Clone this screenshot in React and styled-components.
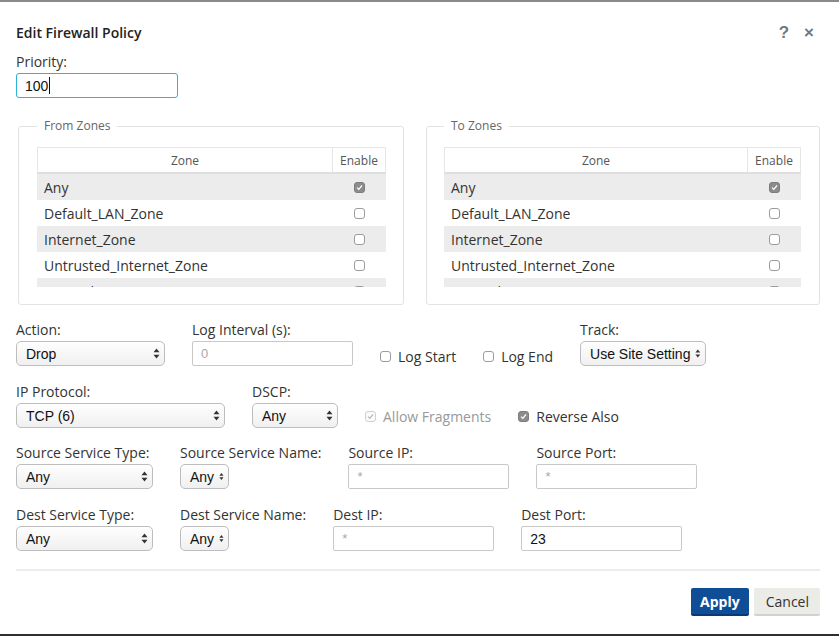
import React from "react";
import styled, { createGlobalStyle, css } from "styled-components";

const GlobalStyle = createGlobalStyle`
  html, body {
    margin: 0;
    padding: 0;
    background: #fff;
  }
  body {
    font-family: "Open Sans", "Liberation Sans", sans-serif;
    color: #333;
  }
`;

const Page = styled.div`
  width: 839px;
  height: 636px;
  box-sizing: border-box;
  border-top: 2px solid #8a8a8a;
  border-bottom: 2px solid #2e2e2e;
  display: flex;
  flex-direction: column;
  overflow: hidden;
`;

const Header = styled.div`
  display: flex;
  align-items: center;
  justify-content: space-between;
  padding: 21px 25px 0 16px;
  height: 20px;
`;

const Title = styled.h1`
  margin: 0;
  font-size: 14px;
  line-height: 20px;
  font-weight: 600;
  color: #222;
`;

const HeaderTools = styled.div`
  display: flex;
  align-items: center;
  gap: 15px;
  font-weight: 700;
`;

const ToolGlyph = styled.span`
  font-family: "Liberation Sans", sans-serif;
  font-size: ${(p) => p.$size}px;
  line-height: 20px;
  color: #777;
`;

const Body = styled.div`
  padding: 9px 19px 0 16px;
`;

const Label = styled.div`
  font-size: 14px;
  line-height: 20px;
  color: #333;
  white-space: nowrap;
  margin-bottom: 1px;
`;

const TextBox = styled.div`
  width: ${(p) => p.$w}px;
  height: 25px;
  box-sizing: border-box;
  border: 1px solid ${(p) => (p.$focus ? "#2bb3d8" : "#c9c9c9")};
  border-radius: ${(p) => (p.$focus ? 3 : 2)}px;
  padding: 0 8px;
  display: flex;
  align-items: center;
  font-family: "Liberation Sans", Arial, sans-serif;
  font-size: ${(p) => (p.$placeholder ? 13 : 14)}px;
  color: ${(p) => (p.$placeholder ? "#a9a9a9" : "#111")};
  background: #fff;
`;

const Caret = styled.span`
  display: inline-block;
  width: 1px;
  height: 17px;
  background: #111;
  margin-left: 1px;
`;

const Zones = styled.div`
  display: grid;
  grid-template-columns: 386px 394px;
  column-gap: 22px;
  margin: 20px 0 0 2px;
`;

const Fieldset = styled.fieldset`
  margin: 0;
  border: 1px solid #e2e2e2;
  border-radius: 3px;
  padding: 13px ${(p) => p.$pr}px 17px ${(p) => p.$pl}px;
  min-width: 0;
`;

const Legend = styled.legend`
  font-size: 12px;
  line-height: 16px;
  color: #666;
  padding: 0 7px;
  margin-left: 0;
`;

const Table = styled.div`
  display: flex;
  flex-direction: column;
`;

const HeadRow = styled.div`
  display: grid;
  grid-template-columns: 1fr 53px;
  height: 24px;
  border: 1px solid #e6e6e6;
  border-bottom: 2px solid #dedede;
`;

const HeadCell = styled.div`
  display: flex;
  align-items: center;
  justify-content: center;
  font-size: 12px;
  color: #555;
  ${(p) =>
    p.$divided &&
    css`
      border-left: 1px solid #e6e6e6;
    `}
`;

const Rows = styled.div`
  height: 113px;
  overflow: hidden;
`;

const Row = styled.div`
  display: grid;
  grid-template-columns: 1fr 53px;
  height: 26px;
  align-items: center;
  background: ${(p) => (p.$alt ? "#ececec" : "#fff")};
`;

const ZoneName = styled.div`
  padding-left: 7px;
  font-size: 14px;
  color: #333;
`;

const CheckCell = styled.div`
  display: flex;
  justify-content: center;
`;

const Box = styled.span`
  width: 11px;
  height: 11px;
  box-sizing: border-box;
  border-radius: 3px;
  display: inline-flex;
  align-items: center;
  justify-content: center;
  flex: none;
  border: 1px solid #9c9c9c;
  background: #fff;
  ${(p) =>
    p.$checked &&
    !p.$disabled &&
    css`
      border-color: #7d7d7d;
      background: #8c8c8c;
    `}
  ${(p) =>
    p.$disabled &&
    css`
      border-color: #cfcfcf;
      background: #fbfbfb;
    `}
`;

const Checkbox = ({ checked, disabled }) => (
  <Box $checked={checked} $disabled={disabled}>
    {checked && (
      <svg width="7" height="7" viewBox="0 0 7 7">
        <path
          d="M1 3.6 L2.8 5.3 L6 1.5"
          fill="none"
          stroke={disabled ? "#b8b8b8" : "#fff"}
          strokeWidth="1.2"
        />
      </svg>
    )}
  </Box>
);

const FormRow = styled.div`
  display: flex;
  align-items: flex-end;
  gap: 27px;
  margin-top: ${(p) => p.$mt}px;
`;

const Field = styled.div`
  display: flex;
  flex-direction: column;
`;

const CheckItem = styled.label`
  display: flex;
  align-items: center;
  gap: 7px;
  height: 25px;
  margin-bottom: ${(p) => p.$drop}px;
  font-size: 14px;
  color: ${(p) => (p.$disabled ? "#999" : "#333")};
`;

const SelectBox = styled.div`
  width: ${(p) => p.$w}px;
  height: 25px;
  box-sizing: border-box;
  border: 1px solid #bdbdbd;
  border-radius: 5px;
  background: linear-gradient(#fefefe, #f0f0f0);
  display: flex;
  align-items: center;
  justify-content: space-between;
  gap: 5px;
  padding: 0 4px 0 9px;
  font-family: "Liberation Sans", Arial, sans-serif;
  font-size: 14px;
  color: #111;
  white-space: nowrap;
`;

const Arrows = () => (
  <svg width="7" height="11" viewBox="0 0 7 11">
    <path d="M3.5 0.5 L6.5 4.3 L0.5 4.3 Z" fill="#333" />
    <path d="M3.5 10.5 L6.5 6.7 L0.5 6.7 Z" fill="#333" />
  </svg>
);

const Select = ({ w, children }) => (
  <SelectBox $w={w}>
    <span>{children}</span>
    <Arrows />
  </SelectBox>
);

const Divider = styled.hr`
  border: none;
  border-top: 2px solid #ececec;
  margin: 18px 0 0 0;
`;

const Footer = styled.div`
  display: flex;
  justify-content: flex-end;
  gap: 5px;
  margin-top: 17px;
`;

const Button = styled.button`
  height: 28px;
  box-sizing: border-box;
  border: none;
  border-radius: 2px;
  font-family: "Open Sans", sans-serif;
  font-size: 14px;
  cursor: pointer;
  ${(p) =>
    p.$primary
      ? css`
          padding: 0 9px;
          background: #0f4d97;
          border-bottom: 2px solid #093a74;
          color: #fff;
          font-weight: 700;
        `
      : css`
          padding: 0 11px 0 12px;
          background: #ebebe7;
          border-bottom: 2px solid #d2d2cd;
          color: #333;
        `}
`;

const zones = [
  { name: "Any", on: true },
  { name: "Default_LAN_Zone" },
  { name: "Internet_Zone" },
  { name: "Untrusted_Internet_Zone" },
  { name: "Trusted_Zone" },
];

const ZoneTable = ({ title, pl, pr }) => (
  <Fieldset $pl={pl} $pr={pr}>
    <Legend>{title}</Legend>
    <Table>
      <HeadRow>
        <HeadCell>Zone</HeadCell>
        <HeadCell $divided>Enable</HeadCell>
      </HeadRow>
      <Rows>
        {zones.map((z, i) => (
          <Row key={z.name} $alt={i % 2 === 0}>
            <ZoneName>{z.name}</ZoneName>
            <CheckCell>
              <Checkbox checked={z.on} />
            </CheckCell>
          </Row>
        ))}
      </Rows>
    </Table>
  </Fieldset>
);

export default function App() {
  return (
    <>
      <GlobalStyle />
      <Page>
        <Header>
          <Title>Edit Firewall Policy</Title>
          <HeaderTools>
            <ToolGlyph $size={17}>?</ToolGlyph>
            <ToolGlyph $size={17}>×</ToolGlyph>
          </HeaderTools>
        </Header>
        <Body>
          <Field>
            <Label>Priority:</Label>
            <TextBox $w={162} $focus>
              100
              <Caret />
            </TextBox>
          </Field>

          <Zones>
            <ZoneTable title="From Zones" pl={18} pr={17} />
            <ZoneTable title="To Zones" pl={17} pr={18} />
          </Zones>

          <FormRow $mt={15}>
            <Field>
              <Label>Action:</Label>
              <Select w={149}>Drop</Select>
            </Field>
            <Field>
              <Label>Log Interval (s):</Label>
              <TextBox $w={161} $placeholder>
                0
              </TextBox>
            </Field>
            <CheckItem $drop={-3}>
              <Checkbox />
              Log Start
            </CheckItem>
            <CheckItem $drop={-3}>
              <Checkbox />
              Log End
            </CheckItem>
            <Field>
              <Label>Track:</Label>
              <Select w={126}>Use Site Setting</Select>
            </Field>
          </FormRow>

          <FormRow $mt={16}>
            <Field>
              <Label>IP Protocol:</Label>
              <Select w={209}>TCP (6)</Select>
            </Field>
            <Field>
              <Label>DSCP:</Label>
              <Select w={86}>Any</Select>
            </Field>
            <CheckItem $disabled $drop={-1}>
              <Checkbox checked disabled />
              Allow Fragments
            </CheckItem>
            <CheckItem $drop={-1}>
              <Checkbox checked />
              Reverse Also
            </CheckItem>
          </FormRow>

          <FormRow $mt={15}>
            <Field>
              <Label>Source Service Type:</Label>
              <Select w={137}>Any</Select>
            </Field>
            <Field>
              <Label>Source Service Name:</Label>
              <Select w={49}>Any</Select>
            </Field>
            <Field>
              <Label>Source IP:</Label>
              <TextBox $w={161} $placeholder>
                *
              </TextBox>
            </Field>
            <Field>
              <Label>Source Port:</Label>
              <TextBox $w={161} $placeholder>
                *
              </TextBox>
            </Field>
          </FormRow>

          <FormRow $mt={16}>
            <Field>
              <Label>Dest Service Type:</Label>
              <Select w={137}>Any</Select>
            </Field>
            <Field>
              <Label>Dest Service Name:</Label>
              <Select w={49}>Any</Select>
            </Field>
            <Field>
              <Label>Dest IP:</Label>
              <TextBox $w={161} $placeholder>
                *
              </TextBox>
            </Field>
            <Field>
              <Label>Dest Port:</Label>
              <TextBox $w={161}>23</TextBox>
            </Field>
          </FormRow>

          <Divider />
          <Footer>
            <Button $primary>Apply</Button>
            <Button>Cancel</Button>
          </Footer>
        </Body>
      </Page>
    </>
  );
}
